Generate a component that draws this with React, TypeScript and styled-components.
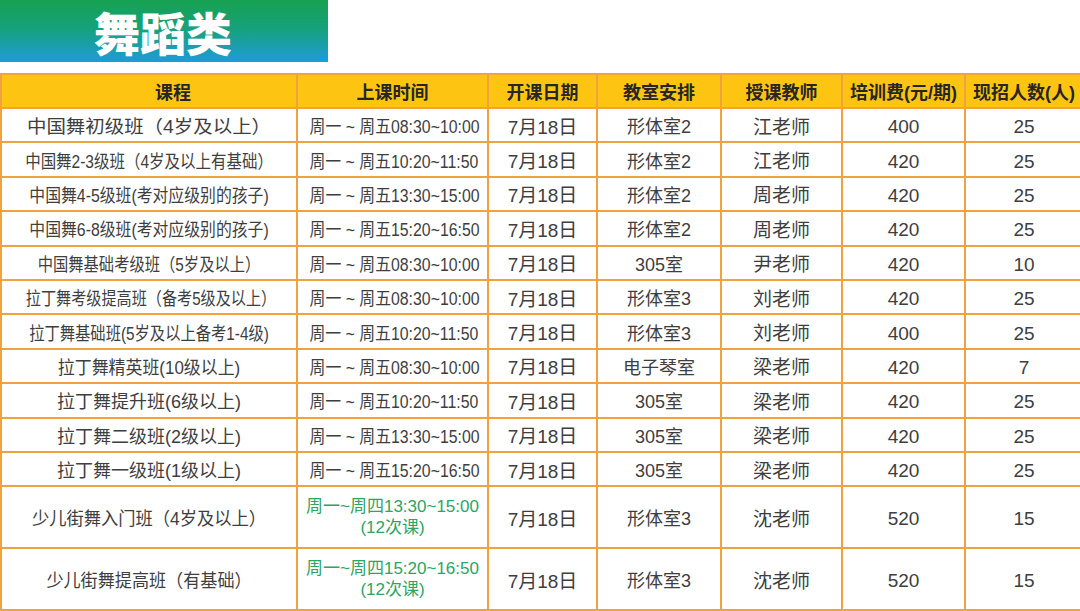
import React from "react";
import styled, { createGlobalStyle } from "styled-components";

const GlobalStyle = createGlobalStyle`
    html, body {
        margin: 0;
        padding: 0;
        background: #ffffff;
    }
    body {
        width: 1080px;
        height: 611px;
        overflow: hidden;
        font-family: "Liberation Sans", "Noto Sans CJK SC", sans-serif;
    }
`;

const Page = styled.div`
    display: flex;
    flex-direction: column;
    gap: 11px;
`;

const Banner = styled.div`
    width: 328px;
    height: 62px;
    background: linear-gradient(180deg, #17a150 0%, #16a27a 45%, #1e9bd9 100%);
    display: flex;
    align-items: center;
    padding-left: 94px;
    box-sizing: border-box;
`;

const BannerTitle = styled.h1`
    margin: 0;
    color: #ffffff;
    font-family: "Noto Sans CJK SC", sans-serif;
    font-size: 46px;
    font-weight: 900;
    line-height: 1;
`;

const Table = styled.table`
    width: 1082px;
    table-layout: fixed;
    border-collapse: collapse;
    border: 2px solid #f0a23e;
`;

const HeadCell = styled.th<{ $shift?: number }>`
    height: 32px;
    padding: 0 0 0 ${({ $shift }) => ($shift ? `${$shift * 2}px` : "0")};
    background: #fdc512;
    border: 2px solid #f0a23e;
    color: #262626;
    font-size: 18px;
    font-weight: 700;
    text-align: center;
    white-space: nowrap;
`;

const Cell = styled.td<{ $tall?: boolean; $size?: number }>`
    height: ${({ $tall }) => ($tall ? "60px" : "32.4px")};
    padding: 0;
    border: 2px solid #f0a23e;
    color: #3e3e3e;
    font-size: ${({ $size }) => $size ?? 18}px;
    text-align: center;
    white-space: nowrap;
`;

const Fit = styled.span<{ $scale: number }>`
    display: inline-block;
    transform: scaleX(${({ $scale }) => $scale});
    transform-origin: center;
`;

/* Latin digits sit higher than the CJK glyphs, so nudge number-only cells down */
const Digits = styled.span`
    display: inline-block;
    padding-top: 4px;
`;

const GreenTime = styled.div`
    color: #2aa563;
    font-size: 17px;
    line-height: 21px;
`;

type Row = {
    course: string;
    fit: number;
    time: string;
    room: string;
    teacher: string;
    fee: string;
    count: string;
    green?: boolean;
};

const headers = ["课程", "上课时间", "开课日期", "教室安排", "授课教师", "培训费(元/期)", "现招人数(人)"];
const widths = [296, 191, 109, 124, 121, 123, 118];

const rows: Row[] = [
    { course: "中国舞初级班（4岁及以上）", fit: 1.08, time: "周一 ~ 周五08:30~10:00", room: "形体室2", teacher: "江老师", fee: "400", count: "25" },
    { course: "中国舞2-3级班（4岁及以上有基础）", fit: 0.86, time: "周一 ~ 周五10:20~11:50", room: "形体室2", teacher: "江老师", fee: "420", count: "25" },
    { course: "中国舞4-5级班(考对应级别的孩子)", fit: 0.88, time: "周一 ~ 周五13:30~15:00", room: "形体室2", teacher: "周老师", fee: "420", count: "25" },
    { course: "中国舞6-8级班(考对应级别的孩子)", fit: 0.88, time: "周一 ~ 周五15:20~16:50", room: "形体室2", teacher: "周老师", fee: "420", count: "25" },
    { course: "中国舞基础考级班（5岁及以上）", fit: 0.85, time: "周一 ~ 周五08:30~10:00", room: "305室", teacher: "尹老师", fee: "420", count: "10" },
    { course: "拉丁舞考级提高班（备考5级及以上）", fit: 0.84, time: "周一 ~ 周五08:30~10:00", room: "形体室3", teacher: "刘老师", fee: "420", count: "25" },
    { course: "拉丁舞基础班(5岁及以上备考1-4级)", fit: 0.85, time: "周一 ~ 周五10:20~11:50", room: "形体室3", teacher: "刘老师", fee: "400", count: "25" },
    { course: "拉丁舞精英班(10级以上)", fit: 0.94, time: "周一 ~ 周五08:30~10:00", room: "电子琴室", teacher: "梁老师", fee: "420", count: "7" },
    { course: "拉丁舞提升班(6级以上)", fit: 1, time: "周一 ~ 周五10:20~11:50", room: "305室", teacher: "梁老师", fee: "420", count: "25" },
    { course: "拉丁舞二级班(2级以上)", fit: 1, time: "周一 ~ 周五13:30~15:00", room: "305室", teacher: "梁老师", fee: "420", count: "25" },
    { course: "拉丁舞一级班(1级以上)", fit: 1, time: "周一 ~ 周五15:20~16:50", room: "305室", teacher: "梁老师", fee: "420", count: "25" },
    { course: "少儿街舞入门班（4岁及以上）", fit: 0.96, time: "周一~周四13:30~15:00", room: "形体室3", teacher: "沈老师", fee: "520", count: "15", green: true },
    { course: "少儿街舞提高班（有基础）", fit: 0.95, time: "周一~周四15:20~16:50", room: "形体室3", teacher: "沈老师", fee: "520", count: "15", green: true },
];

export default function App() {
    return (
        <>
            <GlobalStyle />
            <Page>
                <Banner>
                    <BannerTitle>舞蹈类</BannerTitle>
                </Banner>
                <Table>
                    <colgroup>
                        {widths.map((w, i) => (
                            <col key={i} style={{ width: w }} />
                        ))}
                    </colgroup>
                    <thead>
                        <tr>
                            {headers.map((h, i) => (
                                <HeadCell key={h} $shift={i === 0 ? 24 : 0}>{h}</HeadCell>
                            ))}
                        </tr>
                    </thead>
                    <tbody>
                        {rows.map((r, i) => (
                            <tr key={i}>
                                <Cell $tall={r.green}>
                                    <Fit $scale={r.fit}>{r.course}</Fit>
                                </Cell>
                                {r.green ? (
                                    <Cell $tall>
                                        <GreenTime>{r.time}</GreenTime>
                                        <GreenTime>(12次课)</GreenTime>
                                    </Cell>
                                ) : (
                                    <Cell>
                                        <Fit $scale={0.88}>{r.time}</Fit>
                                    </Cell>
                                )}
                                <Cell $tall={r.green} $size={19}>7月18日</Cell>
                                <Cell $tall={r.green}>{r.room}</Cell>
                                <Cell $tall={r.green} $size={19}>{r.teacher}</Cell>
                                <Cell $tall={r.green} $size={19}>
                                    <Digits>{r.fee}</Digits>
                                </Cell>
                                <Cell $tall={r.green} $size={19}>
                                    <Digits>{r.count}</Digits>
                                </Cell>
                            </tr>
                        ))}
                    </tbody>
                </Table>
            </Page>
        </>
    );
}
